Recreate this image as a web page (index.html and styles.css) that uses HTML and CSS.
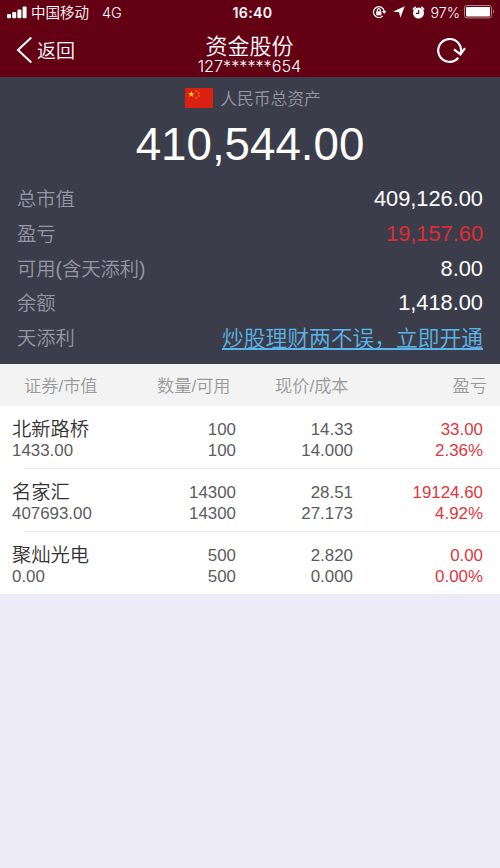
FILE: index.html
```html
<!DOCTYPE html>
<html lang="zh-CN">
<head>
  <meta charset="UTF-8">
  <title>资金股份</title>
  <meta name="viewport" content="width=device-width, initial-scale=1.0">
  <link rel="stylesheet" href="styles.css">
</head>
<body>
  <header class="top">
    <!-- Status bar -->
    <div class="status">
      <div class="status-left">
        <svg class="signal" width="20" height="13" viewBox="0 0 20 13" fill="#fff">
          <rect x="0" y="8" width="4" height="4.2" rx="1"/>
          <rect x="5.2" y="6" width="4" height="6.2" rx="1"/>
          <rect x="10.4" y="3.5" width="4" height="8.7" rx="1"/>
          <rect x="15.6" y="0.5" width="4" height="11.7" rx="1"/>
        </svg>
        <span class="carrier">中国移动</span>
        <span class="network">4G</span>
      </div>
      <div class="clock">16:40</div>
      <div class="status-right">
        <svg class="lock" width="15" height="14" viewBox="0 0 15 14" fill="none" stroke="#fff" stroke-width="1.2">
          <path d="M10.8 10.8A5.4 5.4 0 1 1 12.2 6.2"/>
          <path d="M10 6h4.4l-2.2 3z" fill="#fff" stroke="none"/>
          <rect x="4.2" y="6.3" width="5.2" height="4" fill="#fff" stroke="none"/>
          <path d="M5.3 6.5V5.2a1.5 1.5 0 0 1 3 0v1.3"/>
        </svg>
        <svg class="arrow" width="12" height="12" viewBox="0 0 12 12" fill="#fff">
          <path d="M11.8 0.2L7.4 11.8L6 6.2L0.2 5.4z"/>
        </svg>
        <svg class="alarm" width="13" height="13" viewBox="0 0 13 13">
          <circle cx="6.5" cy="7" r="5.5" fill="#fff"/>
          <path d="M1 3.6A7 7 0 0 1 3.8 1M12 3.6A7 7 0 0 0 9.2 1" stroke="#fff" stroke-width="1.6" fill="none"/>
          <path d="M6.7 4v3.4H4" stroke="#640014" stroke-width="1.1" fill="none"/>
        </svg>
        <span class="percent">97%</span>
        <svg class="battery" width="31" height="14" viewBox="0 0 31 14">
          <rect x="0.5" y="0.5" width="27" height="12.4" rx="2.5" fill="none" stroke="#b5848d"/>
          <rect x="2" y="2" width="24" height="9.4" rx="1" fill="#fff"/>
          <path d="M29 4.5q2 2.2 0 4.4z" fill="#b5848d"/>
        </svg>
      </div>
    </div>

    <!-- Navigation -->
    <nav class="nav">
      <div class="back">
        <svg width="17" height="28" viewBox="0 0 17 28" fill="none" stroke="#fff" stroke-width="2">
          <path d="M15.3 1.5L2 14l13.3 12.5"/>
        </svg>
        <span>返回</span>
      </div>
      <div class="title">
        <h1>资金股份</h1>
        <p>127******654</p>
      </div>
      <div class="refresh">
        <svg width="30" height="28" viewBox="0 0 30 28" fill="none" stroke="#fff" stroke-width="2.2">
          <path d="M22.3 20.8A11.4 11.4 0 1 1 24.6 16.5"/>
          <path d="M18 12.4l6.4 5 4.6-6.2"/>
        </svg>
      </div>
    </nav>
  </header>

  <!-- Account summary -->
  <section class="summary">
    <div class="currency">
      <svg width="28" height="20" viewBox="0 0 28 20">
        <rect width="28" height="20" rx="1" fill="#da2010"/>
        <path fill="#ffd51d" d="M6.3 3l.8 2.2h2.4L7.6 6.7l.7 2.3-2-1.4-2 1.4.7-2.3-1.9-1.5h2.4z"/>
        <g fill="#f2a313">
          <circle cx="11.5" cy="3" r="0.8"/>
          <circle cx="13.8" cy="5" r="0.8"/>
          <circle cx="13.8" cy="8" r="0.8"/>
          <circle cx="11.5" cy="10" r="0.8"/>
        </g>
      </svg>
      <span>人民币总资产</span>
    </div>
    <div class="total">410,544.00</div>
    <div class="line"><span class="label">总市值</span><span class="value">409,126.00</span></div>
    <div class="line"><span class="label">盈亏</span><span class="value red">19,157.60</span></div>
    <div class="line"><span class="label">可用(含天添利)</span><span class="value">8.00</span></div>
    <div class="line"><span class="label">余额</span><span class="value">1,418.00</span></div>
    <div class="line"><span class="label">天添利</span><a class="link">炒股理财两不误，立即开通</a></div>
  </section>

  <!-- Holdings -->
  <section class="holdings">
    <div class="row head">
      <div>证券/市值</div>
      <div>数量/可用</div>
      <div>现价/成本</div>
      <div>盈亏</div>
    </div>
    <div class="row">
      <div><b>北新路桥</b><span>1433.00</span></div>
      <div><span>100</span><span>100</span></div>
      <div><span>14.33</span><span>14.000</span></div>
      <div class="profit"><span>33.00</span><span>2.36%</span></div>
    </div>
    <div class="row">
      <div><b>名家汇</b><span>407693.00</span></div>
      <div><span>14300</span><span>14300</span></div>
      <div><span>28.51</span><span>27.173</span></div>
      <div class="profit"><span>19124.60</span><span>4.92%</span></div>
    </div>
    <div class="row">
      <div><b>聚灿光电</b><span>0.00</span></div>
      <div><span>500</span><span>500</span></div>
      <div><span>2.820</span><span>0.000</span></div>
      <div class="profit"><span>0.00</span><span>0.00%</span></div>
    </div>
  </section>
</body>
</html>
```
FILE: styles.css
```css
* {
  box-sizing: border-box;
}
body {
  margin: 0;
  min-height: 868px;
  background: #edebf7;
  font-family: "Liberation Sans", "Noto Sans CJK SC", sans-serif;
  font-weight: 350;
}
svg {
  display: block;
  flex: none;
}
h1, p {
  margin: 0;
  font-weight: 350;
}
.top {
  height: 77px;
  background: #640014;
  color: #fff;
}
.status {
  display: grid;
  grid-template-columns: 1fr auto 1fr;
  align-items: center;
  height: 24px;
  padding: 0 5px 0 7px;
  font-family: Inter, "Noto Sans CJK SC", sans-serif;
  font-size: 14px;
}
.status-left, .status-right {
  display: flex;
  align-items: center;
}
.status-right {
  justify-content: flex-end;
}
.carrier {
  margin-left: 4px;
  font-size: 14.5px;
  line-height: 20px;
  padding-top: 1px;
}
.network {
  margin-left: 13px;
  font-size: 14.5px;
}
.clock {
  padding-left: 3px;
  font-size: 14.2px;
  font-weight: 600;
  letter-spacing: 0.3px;
}
.arrow {
  margin-left: 6px;
}
.alarm {
  margin-left: 7px;
}
.percent {
  margin: 0 4px 0 6px;
  font-size: 14.2px;
}
.nav {
  display: grid;
  grid-template-columns: 1fr auto 1fr;
  height: 53px;
  padding: 0 34px 0 16px;
}
.back {
  display: flex;
  align-items: center;
  gap: 4px;
  height: 52px;
  font-size: 19px;
}
.back span {
  padding-bottom: 1px;
}
.title {
  padding-left: 17px;
  text-align: center;
}
.title h1 {
  margin-top: 10px;
  font-size: 22px;
  line-height: 25px;
}
.title p {
  font-family: Inter, sans-serif;
  font-size: 16.2px;
  line-height: 14px;
}
.refresh {
  display: flex;
  align-items: center;
  justify-content: flex-end;
  height: 53px;
}
.summary {
  height: 287px;
  padding: 10px 17px 0;
  background: #3b3d4a;
  color: #fff;
}
.currency {
  display: flex;
  align-items: center;
  justify-content: center;
  gap: 7px;
  height: 22px;
  padding-left: 6px;
  color: #9598a4;
  font-size: 16.8px;
}
.total {
  height: 72px;
  font-size: 45.7px;
  line-height: 71px;
  text-align: center;
}
.line {
  display: flex;
  align-items: center;
  justify-content: space-between;
  height: 34.7px;
  font-size: 19.3px;
}
.label {
  color: #9598a4;
}
.value {
  padding-top: 2px;
  font-size: 21.8px;
}
.red {
  color: #e02b35;
}
.link {
  padding-bottom: 2px;
  color: #5bb5e8;
  font-size: 21.75px;
  text-decoration: underline;
}
.holdings {
  background: #fff;
}
.row {
  display: grid;
  grid-template-columns: 118px 106px 117px 130px;
  height: 63px;
  padding: 13px 0 0 12px;
  background: linear-gradient(#e7e7e9, #e7e7e9) 24px 62px / 476px 1px no-repeat;
  color: #5c5c5c;
  font-size: 16.9px;
  line-height: 21px;
  text-align: right;
}
.row:last-child {
  height: 62px;
  background: none;
}
.row span, .row b {
  display: block;
}
.row > div:first-child {
  text-align: left;
}
.row b {
  color: #333;
  font-size: 19.3px;
  font-weight: 350;
}
.row .profit {
  color: #e0373d;
}
.row.head {
  grid-template-columns: 133px 118px 124px 88px;
  height: 42px;
  padding: 0 0 0 24px;
  background: #f3f3f3;
  color: #999;
  font-size: 17.2px;
  line-height: 44px;
  text-align: left;
}
.head div:last-child {
  text-align: right;
}
```
